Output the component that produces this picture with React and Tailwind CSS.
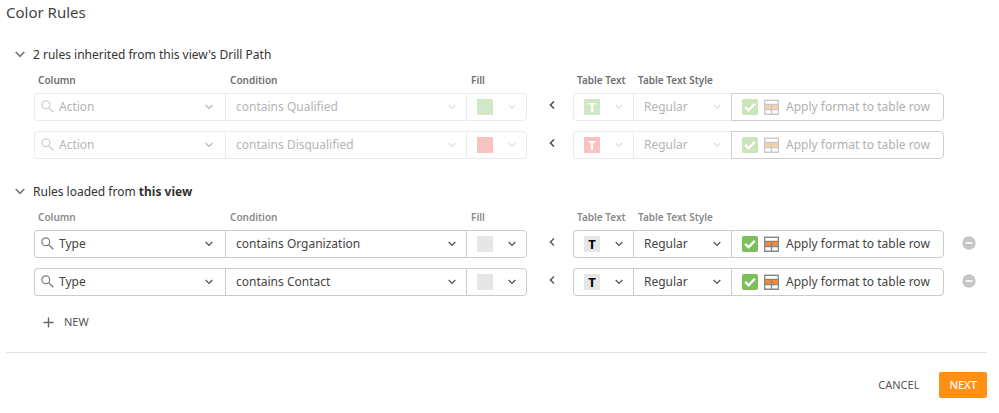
import { useState } from "react";

const ROW_GRID =
  "grid grid-cols-[minmax(0,191fr)_minmax(0,241fr)_61px_46px_60px_98px_213px_55px] pl-[34px]";

const INHERITED = [
  { id: 1, column: "Action", condition: "contains Qualified", swatch: "bg-[#d0e8c6]", text: "bg-[#d0e8c6] text-white" },
  { id: 2, column: "Action", condition: "contains Disqualified", swatch: "bg-[#f6c3c0]", text: "bg-[#f6c3c0] text-white" },
];

const OWN = [
  { id: 3, column: "Type", condition: "contains Organization", swatch: "bg-[#e6e6e6]", text: "bg-[#e6e6e6] text-black" },
  { id: 4, column: "Type", condition: "contains Contact", swatch: "bg-[#e6e6e6]", text: "bg-[#e6e6e6] text-black" },
];

function Chevron({ className }) {
  return (
    <svg viewBox="0 0 8 6" className={`w-2 h-[6px] shrink-0 pointer-events-none ${className}`} fill="none" stroke="currentColor" strokeWidth="1.3" aria-hidden="true">
      <path d="M0.7 1l3.3 3.4L7.3 1" />
    </svg>
  );
}

function SearchIcon({ className }) {
  return (
    <svg viewBox="0 0 13 13" className={`w-[13px] h-[13px] ${className}`} fill="none" stroke="currentColor" strokeWidth="1.2" aria-hidden="true">
      <circle cx="4.8" cy="4.8" r="3.9" />
      <path d="M7.7 7.7l4.6 4.5" strokeWidth="1.4" />
    </svg>
  );
}

function RowIcon({ faded }) {
  const line = faded ? "#c9c9cb" : "#85868a";
  const fill = faded ? "#fbcfa8" : "#f68a33";
  return (
    <svg viewBox="0 0 15 16" className="w-[15px] h-4 shrink-0" aria-hidden="true">
      <path d="M0 0.6h15V16H0z" fill={line} />
      <path d="M1.3 1.9h12.4v2.9H1.3zM1.3 11.2h5.5v3.4H1.3zM8.2 11.2h5.5v3.4H8.2z" fill="#fff" />
      <path d="M1.3 6h5.5v4H1.3zM8.2 6h5.5v4H8.2z" fill={fill} />
    </svg>
  );
}

function Select({ label, value, faded, search, chevron, className }) {
  return (
    <div className={`relative flex items-center border-y border-l ${className}`}>
      {search && <SearchIcon className={`absolute left-[6px] top-[6px] ${faded ? "text-[#cfcfcf]" : "text-[#808080]"}`} />}
      <select
        aria-label={label}
        defaultValue={value}
        className={`appearance-none w-full h-full bg-transparent outline-none text-xs opacity-100 ${search ? "pl-6" : "pl-[10px]"} pr-6 ${faded ? "text-[#b5b5b5]" : "text-[#444]"}`}
      >
        <option>{value}</option>
      </select>
      <Chevron className={`absolute ${search ? "right-3" : "right-[10px]"} ${chevron}`} />
    </div>
  );
}

function Labels({ faded }) {
  return (
    <div className={`${ROW_GRID} mt-[7px] mb-[5px] h-4 leading-4 text-[10px] font-semibold ${faded ? "text-[#707070]" : "text-[#8a8a8a]"}`}>
      <span className="pl-1">Column</span>
      <span className="pl-[5px]">Condition</span>
      <span className="pl-[5px]">Fill</span>
      <span />
      <span className="pl-1 whitespace-nowrap">Table Text</span>
      <span className="pl-[5px] whitespace-nowrap">Table Text Style</span>
    </div>
  );
}

function Rule({ rule, faded, onRemove }) {
  const [applyRow, setApplyRow] = useState(true);
  const border = faded ? "border-[#ebebeb]" : "border-[#cbcbcb]";
  const chevron = faded ? "text-[#e0e0e0]" : "text-[#555]";

  return (
    <fieldset disabled={faded} className={`${ROW_GRID} grid-rows-[28px]`}>
      <Select label="Column" value={rule.column} faded={faded} search chevron={faded ? "text-[#b9b9b9]" : chevron} className={`rounded-l-sm ${border}`} />
      <Select label="Condition" value={rule.condition} faded={faded} chevron={chevron} className={border} />
      <button type="button" aria-label="Fill" aria-haspopup="listbox" className={`flex items-center justify-between border rounded-r-sm px-[10px] ${border}`}>
        <span className={`w-4 h-4 ${rule.swatch}`} />
        <Chevron className={chevron} />
      </button>
      <button type="button" aria-label="Collapse text options" className={`flex items-center justify-center pl-1 pb-1 ${faded ? "text-[#444]" : "text-[#555]"}`}>
        <svg viewBox="0 0 6 8" className="w-[6px] h-2" fill="none" stroke="currentColor" strokeWidth="1.4" aria-hidden="true">
          <path d="M5 0.6L1.4 4 5 7.4" />
        </svg>
      </button>
      <button type="button" aria-label="Table Text" aria-haspopup="listbox" className={`flex items-center justify-between border-y border-l rounded-l-sm px-[10px] ${border}`}>
        <span className={`w-4 h-4 text-center text-[13px] leading-4 font-bold ${rule.text}`}>T</span>
        <Chevron className={chevron} />
      </button>
      <Select label="Table Text Style" value="Regular" faded={faded} chevron={chevron} className={border} />
      <label className={`flex items-center border rounded-r-sm pl-[10px] text-xs whitespace-nowrap ${faded ? "border-[#cfcfcf] text-[#b0b0b0]" : "border-[#cbcbcb] text-[#444]"}`}>
        <span className="relative w-4 h-4 mr-[6px] shrink-0">
          <input
            type="checkbox"
            checked={applyRow}
            onChange={(e) => setApplyRow(e.target.checked)}
            className={`block appearance-none w-4 h-4 rounded-xs ${faded ? "bg-[#c9e5bc]" : "bg-[#7dc05b]"}`}
          />
          {applyRow && (
            <svg viewBox="0 0 16 16" className="absolute inset-0 pointer-events-none" fill="none" stroke="#fff" strokeWidth="2.4" aria-hidden="true">
              <path d="M3.2 7.8l3.4 3.5 6.2-6.6" />
            </svg>
          )}
        </span>
        <RowIcon faded={faded} />
        <span className="ml-[7px]">Apply format to table row</span>
      </label>
      {onRemove && (
        <button type="button" aria-label="Remove rule" onClick={onRemove} className="flex items-center pl-[18px] pb-[2px]">
          <svg viewBox="0 0 14 14" className="w-[14px] h-[14px]" aria-hidden="true">
            <circle cx="7" cy="7" r="6.7" fill="#c6c6c6" />
            <path d="M3.6 7h6.8" stroke="#fff" strokeWidth="1.6" />
          </svg>
        </button>
      )}
    </fieldset>
  );
}

function Section({ title, rules, faded, onRemove }) {
  const [open, setOpen] = useState(true);
  return (
    <section className="mb-[22px]">
      <button type="button" aria-expanded={open} onClick={() => setOpen(!open)} className="flex items-center h-[21px] pl-[15px] text-xs text-[#333]">
        <svg viewBox="0 0 10 7" className="w-[10px] h-[7px] mr-2" fill="none" stroke="#777" strokeWidth="1.7" aria-hidden="true">
          <path d="M0.7 1L5 5.4 9.3 1" />
        </svg>
        <span className="leading-[21px]">{title}</span>
      </button>
      {open && (
        <>
          <Labels faded={faded} />
          <div className="flex flex-col gap-[10px]">
            {rules.map((r) => (
              <Rule key={r.id} rule={r} faded={faded} onRemove={onRemove && (() => onRemove(r.id))} />
            ))}
          </div>
        </>
      )}
    </section>
  );
}

export default function App() {
  const [rules, setRules] = useState(OWN);
  const addRule = () => setRules([...rules, { ...OWN[0], id: Date.now() }]);

  return (
    <main className="bg-white font-['Noto_Sans',sans-serif] pb-4">
      <h1 className="pl-[6px] h-6 leading-6 text-[15px] text-[#444] mb-5">Color Rules</h1>

      <Section title="2 rules inherited from this view's Drill Path" rules={INHERITED} faded />
      <Section
        title={<>Rules loaded from <b className="font-bold">this view</b></>}
        rules={rules}
        onRemove={(id) => setRules(rules.filter((r) => r.id !== id))}
      />

      <button type="button" onClick={addRule} className="flex items-center h-5 ml-[43px] -mt-[6px] text-[11px] text-[#555]">
        <svg viewBox="0 0 11 11" className="w-[11px] h-[11px] mr-[10px]" fill="none" stroke="#666" strokeWidth="1.4" aria-hidden="true">
          <path d="M5.5 0.5v10M0.5 5.5h10" />
        </svg>
        NEW
      </button>

      <div className="ml-[6px] mt-5 mr-3 pt-[19px] border-t border-[#e2e2e2] flex justify-end items-center">
        <button type="button" className="px-5 h-[26px] text-[11px] text-[#555]">CANCEL</button>
        <button type="button" className="px-[10px] h-[26px] rounded-xs bg-[#ff9015] text-[11px] font-medium text-white">NEXT</button>
      </div>
    </main>
  );
}
